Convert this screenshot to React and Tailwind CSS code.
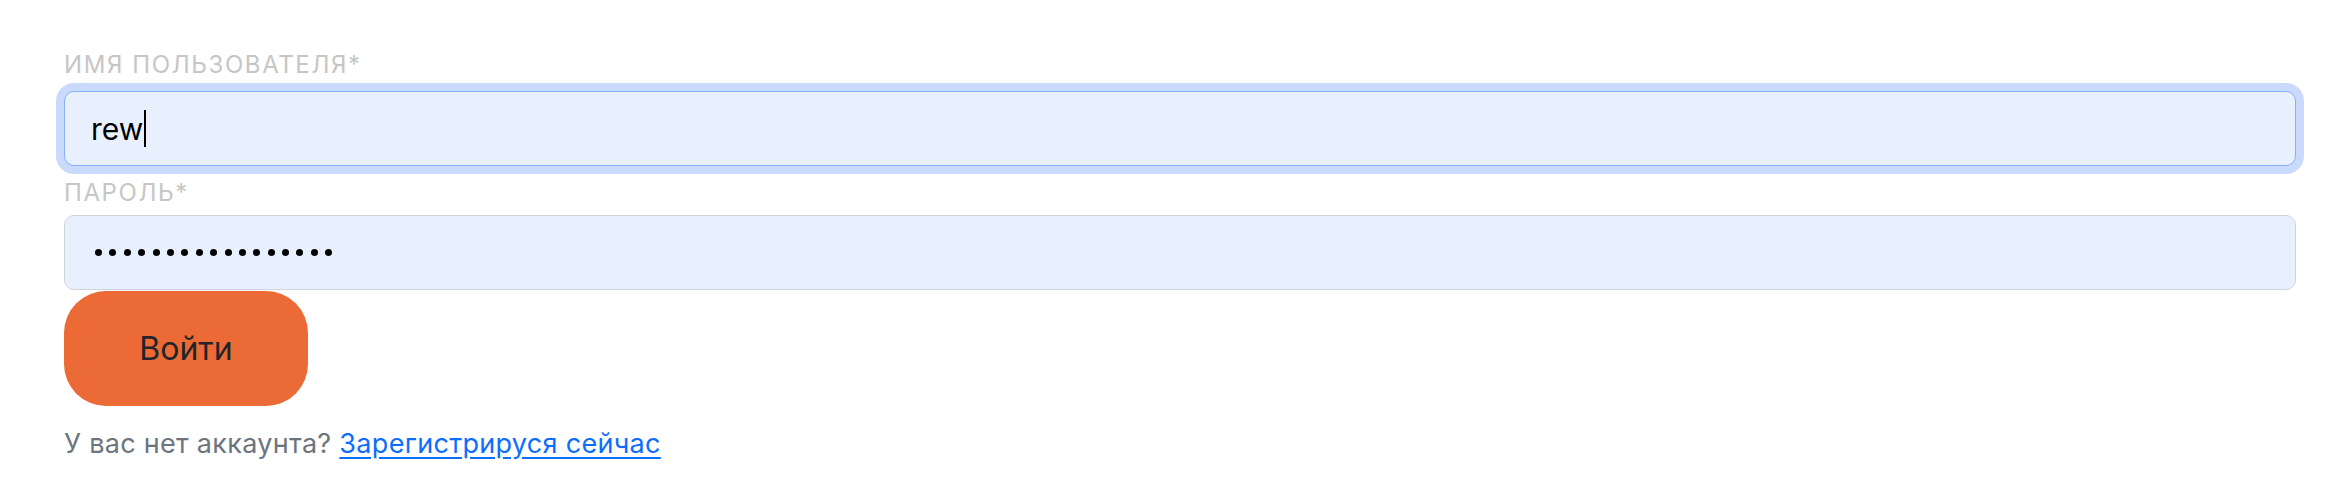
import React from 'react'

const FONT = { fontFamily: 'Inter, "Noto Sans", sans-serif' }

function Label({ children, className = '' }) {
  return (
    <div className={`text-[24px] leading-[30px] tracking-[1.6px] uppercase text-[#c6c6c6] ${className}`}>
      {children}
    </div>
  )
}

export default function App() {
  return (
    <div className="min-h-[504px] w-full bg-white pl-[64px] pr-[50px] pt-[50px] text-[#212529]" style={FONT}>
      {/* username */}
      <Label className="mb-[11px]">Имя пользователя*</Label>
      <div className="flex h-[75px] w-full items-center rounded-[10px] border-[1.5px] border-[#86b0f8] bg-[#e8f0fe] pl-[26px] shadow-[0_0_0_8px_#c9dafc]">
        <span className="text-[30px] leading-none text-black">rew</span>
        <span className="ml-[1px] h-[37px] w-[1.5px] bg-black" />
      </div>

      {/* password */}
      <Label className="mt-[12px] mb-[7px]">Пароль*</Label>
      <div className="flex h-[75px] w-full items-center gap-[7.4px] rounded-[10px] border-[1.5px] border-[#cfd4da] bg-[#e8f0fe] pl-[30px]">
        {Array.from({ length: 17 }).map((_, i) => (
          <span key={i} className="h-[7px] w-[7px] rounded-full bg-black" />
        ))}
      </div>

      {/* submit */}
      <button className="mt-[1px] flex h-[115px] w-[244px] items-center justify-center rounded-[42px] bg-[#eb6a35] text-[32px] text-[#212529]">
        Войти
      </button>

      <p className="mt-[20px] text-[27px] leading-[36px] tracking-[0.3px] text-[#6c757d]">
        У вас нет аккаунта?{' '}
        <a href="#" className="text-[#0d6efd] underline underline-offset-[4px]">
          Зарегистрируся сейчас
        </a>
      </p>
    </div>
  )
}
